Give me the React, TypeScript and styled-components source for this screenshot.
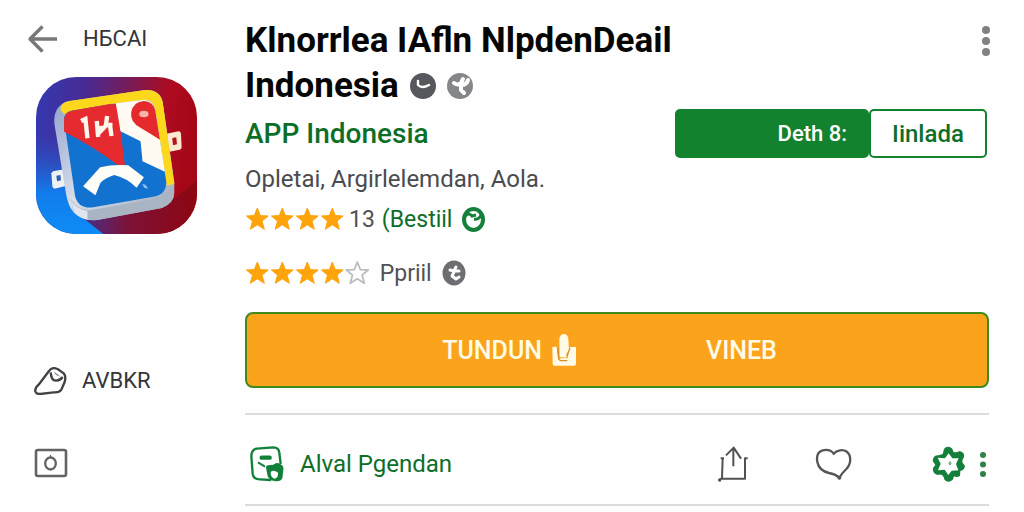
import React from "react";
import styled, { createGlobalStyle } from "styled-components";

const GREEN = "#13822f";
const GREEN_DARK = "#0d6e28";
const GREY = "#55565a";

const GlobalStyle = createGlobalStyle`
  *, *::before, *::after { box-sizing: border-box; }
  body {
    margin: 0;
    background: #fefefe;
    color: #4a4b4e;
    font-family: Roboto, "Liberation Sans", sans-serif;
  }
  button { font: inherit; color: inherit; cursor: pointer; }
`;

const Page = styled.div`
  display: grid;
  grid-template-columns: 245px minmax(0, 1fr);
`;

const Sidebar = styled.nav`
  display: flex;
  flex-direction: column;
  align-items: flex-start;
  padding-left: 27px;
`;

const SideLink = styled.a<{ $height: number; $inset?: number; $gap: number }>`
  display: flex;
  align-items: center;
  gap: ${(p) => p.$gap}px;
  height: ${(p) => p.$height}px;
  padding-left: ${(p) => p.$inset ?? 0}px;
  color: #343538;
  text-decoration: none;
`;

const SideLabel = styled.span`
  font-size: 22px;
  line-height: 28px;
`;

const AppLogo = styled.svg`
  display: block;
  width: 161px;
  height: 157px;
  margin: 0 0 106px 9px;
`;

const Main = styled.main`
  padding: 18px 35px 0 0;
`;

const Header = styled.header`
  display: flex;
  justify-content: space-between;
  align-items: flex-start;
`;

const Title = styled.h1`
  margin: 0;
  font-size: 35px;
  line-height: 45px;
  font-weight: 700;
  color: #060606;
`;

const TitleLine = styled.span`
  display: flex;
  align-items: center;
  gap: 11px;
`;

const IconButton = styled.button`
  display: flex;
  align-items: center;
  justify-content: center;
  padding: 0;
  border: 0;
  background: none;
`;

const MenuButton = styled(IconButton)`
  height: 45px;
  margin-right: -1px;
`;

const Summary = styled.section`
  display: flex;
  justify-content: space-between;
  align-items: flex-start;
`;

const Developer = styled.a`
  display: block;
  font-size: 28px;
  line-height: 52px;
  font-weight: 500;
  color: ${GREEN_DARK};
  text-decoration: none;
`;

const Tagline = styled.p`
  margin: 0;
  font-size: 24px;
  line-height: 39px;
`;

const RatingRow = styled.div`
  display: flex;
  align-items: center;
  height: 40px;
  font-size: 23px;
  & + & { margin-top: 14px; }
`;

const Stars = styled.span`
  display: flex;
  margin-right: 4px;
`;

const RatingText = styled.span<{ $green?: boolean }>`
  margin-right: 10px;
  color: ${(p) => (p.$green ? GREEN_DARK : "#505154")};
`;

const RatingCount = styled(RatingText)`
  margin-right: 7px;
`;

const Choice = styled.div`
  display: flex;
  margin: 1px 2px 0 0;
`;

const ChoiceButton = styled.button<{ $filled?: boolean }>`
  width: ${(p) => (p.$filled ? 194 : 118)}px;
  height: 49px;
  padding: ${(p) => (p.$filled ? "0 20px 0 0" : "0")};
  border: 2px solid ${GREEN};
  border-radius: 5px;
  background: ${(p) => (p.$filled ? GREEN : "#fff")};
  color: ${(p) => (p.$filled ? "#fff" : GREEN_DARK)};
  font-size: ${(p) => (p.$filled ? 22 : 24)}px;
  font-weight: 500;
  text-align: ${(p) => (p.$filled ? "right" : "center")};
`;

const InstallButton = styled.button`
  display: grid;
  grid-template-columns: 329px 1fr;
  align-items: center;
  width: 100%;
  height: 76px;
  margin-top: 19px;
  padding: 0;
  border: 2px solid #3f8a1d;
  border-radius: 8px;
  background: #fba31b;
  color: #fffbe6;
  font-size: 25px;
  font-weight: 500;
`;

const InstallLead = styled.span`
  display: flex;
  align-items: center;
  justify-content: flex-end;
  gap: 10px;
`;

const InstallTail = styled.span`
  padding-left: 130px;
  text-align: left;
`;

const Divider = styled.hr`
  height: 2px;
  margin: 0;
  border: 0;
  background: #dcdcde;
`;

const Actions = styled.section`
  display: flex;
  align-items: center;
  height: 89px;
  padding: 9px 0 0 5px;
`;

const ActionsWrap = styled.div`
  margin-top: 25px;
`;

const ReviewLink = styled.a`
  display: flex;
  align-items: center;
  gap: 15px;
  margin-right: auto;
  font-size: 24px;
  color: ${GREEN_DARK};
  text-decoration: none;
`;

const ActionGroup = styled.div`
  display: flex;
  align-items: center;
`;

const ActionButton = styled(IconButton)<{ $after: number }>`
  margin-right: ${(p) => p.$after}px;
`;

function Star({ empty }: { empty?: boolean }) {
  return (
    <svg width="25" height="26" viewBox="0 0 25 26" aria-hidden="true">
      <path
        d="M12.3 2 L15.3 9.6 L23.2 10 L17.1 15.1 L19.3 23.3 L12.3 18.8 L5.3 23.3 L7.5 15.1 L1.4 10 L9.3 9.6 Z"
        fill={empty ? "#fefefe" : "#fea40b"}
        stroke={empty ? "#bcbdc0" : "#fea40b"}
        strokeWidth={empty ? 1.8 : 1}
        strokeLinejoin="round"
      />
    </svg>
  );
}

function StarRating({ filled, total }: { filled: number; total: number }) {
  return (
    <Stars role="img" aria-label={`${filled} / 5`}>
      {Array.from({ length: total }, (_, i) => (
        <Star key={i} empty={i >= filled} />
      ))}
    </Stars>
  );
}

function Dots({ color, height, radius }: { color: string; height: number; radius: number }) {
  const w = radius * 2;
  return (
    <svg width={w} height={height} viewBox={`0 0 ${w} ${height}`} aria-hidden="true">
      {[radius, height / 2, height - radius].map((y) => (
        <circle key={y} cx={radius} cy={y} r={radius} fill={color} />
      ))}
    </svg>
  );
}

function Logo() {
  return (
    <AppLogo viewBox="33 20 482 471" preserveAspectRatio="none" role="img" aria-label="Indonesia">
      <defs>
        <linearGradient id="logoBg" x1="0" y1="0.15" x2="1" y2="0.3">
          <stop offset="0" stopColor="#3338b0" />
          <stop offset="0.3" stopColor="#4a2a92" />
          <stop offset="0.58" stopColor="#7d1a50" />
          <stop offset="0.8" stopColor="#ae0b20" />
          <stop offset="1" stopColor="#a50716" />
        </linearGradient>
        <linearGradient id="logoBlue" x1="0" y1="0" x2="0" y2="1">
          <stop offset="0.25" stopColor="#2755cc" stopOpacity="0" />
          <stop offset="0.7" stopColor="#127cec" />
          <stop offset="1" stopColor="#0d8cf5" />
        </linearGradient>
        <linearGradient id="logoShade" x1="0" y1="0" x2="1" y2="0">
          <stop offset="0" stopColor="#43308f" />
          <stop offset="0.4" stopColor="#7d1238" />
          <stop offset="1" stopColor="#8e0610" />
        </linearGradient>
        <linearGradient id="logoFrame" x1="0" y1="0" x2="1" y2="1">
          <stop offset="0" stopColor="#8c9fcb" />
          <stop offset="0.5" stopColor="#d8deea" />
          <stop offset="1" stopColor="#98a6b8" />
        </linearGradient>
        <clipPath id="logoClip">
          <rect x="33" y="20" width="482" height="471" rx="120" />
        </clipPath>
      </defs>
      <g clipPath="url(#logoClip)">
        <rect x="33" y="20" width="482" height="471" fill="url(#logoBg)" />
        <path d="M33 80 L110 120 L180 445 L235 491 H33 Z" fill="url(#logoBlue)" />
        <path d="M170 440 L440 390 L515 330 V491 H235 Z" fill="url(#logoShade)" />
        <path d="M84 303 L122 296 L130 345 L89 355 Q83 355 82 348 L79 309 Z" fill="#eef0f4" />
        <path d="M94 316 L106 314 L108 330 L96 333 Z" fill="#2c61b8" />
        <path d="M424 190 L460 183 Q466 183 467 190 L469 230 Q469 236 463 238 L432 244 Z" fill="#fde9cf" />
        <path d="M441 203 L453 201 L455 222 L443 225 Z" fill="#b21515" />
        <path
          d="M88 160 Q84 112 122 94 L360 59 Q402 56 412 94 L447 335 V368 Q447 398 410 413 L220 448 Q177 456 145 426 Q128 405 122 365 Z"
          fill="url(#logoFrame)"
        />
        <path d="M137 385 Q155 418 194 420 L387 386 Q432 375 446 345 V370 Q444 399 410 413 L220 448 Q175 454 145 424 Z" fill="#aab5c4" />
        <path d="M187 421 L187 448 Q165 444 148 427 L137 390 Q155 418 187 421 Z" fill="#dfe5ee" />
        <path d="M106 118 Q106 97 132 92 L360 59 Q402 57 412 94 L447 340 L425 346 L389 116 Q384 87 356 91 L138 121 L117 132 Z" fill="#fbd81c" />
        <path d="M117 150 Q115 127 140 121 L245 103 L355 89 Q383 88 388 112 L423 335 Q424 370 392 378 L205 411 Q160 417 150 377 Z" fill="#1173cf" />
        <path d="M117 184 V150 Q117 127 140 121 L260 100 Q276 99 278 118 L299 284 H278 Q205 228 117 184 Z" fill="#e52b30" />
        <path d="M272 99 L355 88 Q384 87 390 118 L419 304 L352 273 L346 213 L286 183 Z" fill="#fffaf2" />
        <path d="M318 126 Q324 94 356 92 Q384 93 390 120 L404 208 Q372 188 347 173 Q314 157 318 126 Z" fill="#e42a2d" />
        <ellipse cx="356" cy="131" rx="14" ry="10" fill="#f7b5a8" />
        <path d="M174 348 L225 291 Q265 281 309 285 L356 321 L334 352 Q305 323 267 314 Q239 324 226 337 L211 375 Z" fill="#fffdf8" />
        <path d="M351 341 L361 343 L369 355 L357 352 Z" fill="#8dc5ef" />
        <g fill="none" stroke="#fff6ec" strokeWidth="13">
          <path d="M168 152 L181 146 L187 204" />
          <path d="M215 152 L219 200 M219 190 L242 166 L246 137 M244 164 L262 164 M254 160 L259 197 M215 174 L238 172" />
        </g>
      </g>
    </AppLogo>
  );
}

export default function App() {
  return (
    <>
      <GlobalStyle />
      <Page>
        <Sidebar>
          <SideLink href="#back" $height={77} $gap={25}>
            <svg width="31" height="28" viewBox="0 0 31 28" fill="none" stroke="#77787a" strokeWidth="3.4" aria-hidden="true">
              <path d="M30 14 H3 M15.5 1.5 L3 14 L15.5 26.5" strokeLinejoin="round" />
            </svg>
            <SideLabel>HБCAI</SideLabel>
          </SideLink>
          <Logo />
          <SideLink href="#write" $height={82} $inset={7} $gap={15}>
            <svg width="33" height="28" viewBox="44 48 99 84" fill="none" stroke="#414245" aria-hidden="true">
              <path
                d="M48 121 Q46 111 58 101 L89 60 Q99 46 116 55 L133 67 Q141 75 136 93 L126 116 Q119 126 103 124 L63 129 Q51 130 48 121 Z"
                strokeWidth="7"
              />
              <path d="M94 64 Q96 90 111 89 Q123 88 130 78" strokeWidth="7" />
              <path d="M103 61 Q107 76 124 77 Z" fill="#8b8c8e" stroke="none" />
            </svg>
            <SideLabel>AVBKR</SideLabel>
          </SideLink>
          <SideLink href="#photos" $height={82} $inset={7} $gap={0} aria-label="Foto">
            <svg width="34" height="30" viewBox="0 0 34 30" fill="none" stroke="#626366" aria-hidden="true">
              <rect x="2" y="2" width="30" height="26" rx="2" strokeWidth="2.6" />
              <ellipse cx="16.5" cy="15.5" rx="5.3" ry="6" strokeWidth="2.3" />
              <path d="M16.5 7 V10" strokeWidth="1.2" />
            </svg>
          </SideLink>
        </Sidebar>

        <Main>
          <Header>
            <Title>
              <TitleLine>Klnorrlea IAfln NlpdenDeail</TitleLine>
              <TitleLine>
                Indonesia
                <svg width="63" height="28" viewBox="0 0 63 28" aria-hidden="true">
                  <circle cx="13" cy="14" r="13" fill="#57585d" />
                  <path d="M8 9 V13 M8 13 Q12 17 19 13" fill="none" stroke="#fff" strokeWidth="2.4" strokeLinecap="round" />
                  <circle cx="50" cy="14" r="13" fill="#858689" />
                  <path
                    d="M44 11 Q48 14 51 11 M51 11 L53 7 M58 8 Q57 13 51 13 L51 18 L54 21"
                    fill="none"
                    stroke="#fff"
                    strokeWidth="4"
                    strokeLinecap="round"
                  />
                </svg>
              </TitleLine>
            </Title>
            <MenuButton aria-label="Menu">
              <Dots color="#808183" height={30} radius={4} />
            </MenuButton>
          </Header>

          <Summary>
            <div>
              <Developer href="#developer">APP Indonesia</Developer>
              <Tagline>Opletai, Argirlelemdan, Aola.</Tagline>
              <RatingRow>
                <StarRating filled={4} total={4} />
                <RatingCount>13</RatingCount>
                <RatingText $green>(Bestiil</RatingText>
                <svg width="23" height="25" viewBox="0 0 23 25" fill="none" aria-hidden="true">
                  <ellipse cx="11.5" cy="12.5" rx="9.5" ry="10.5" stroke="#14803a" strokeWidth="4" />
                  <path d="M3 9 Q7 5 10 9 L14 8 M19 8 Q17 13 12 12" stroke="#14803a" strokeWidth="3" />
                </svg>
              </RatingRow>
              <RatingRow>
                <StarRating filled={4} total={5} />
                <RatingText>&nbsp;Ppriil</RatingText>
                <svg width="24" height="26" viewBox="0 0 24 26" fill="none" aria-hidden="true">
                  <ellipse cx="12" cy="13" rx="11.5" ry="12.5" fill="#6d6e71" />
                  <path
                    d="M8 10 L12 11 L14 7 M12 11 L17 11 M12 12 L10 16 L14 19 L17 17"
                    stroke="#fff"
                    strokeWidth="3"
                    strokeLinecap="round"
                    strokeLinejoin="round"
                  />
                </svg>
              </RatingRow>
            </div>
            <Choice>
              <ChoiceButton $filled>Deth 8:</ChoiceButton>
              <ChoiceButton>Iinlada</ChoiceButton>
            </Choice>
          </Summary>

          <InstallButton>
            <InstallLead>
              TUNDUN
              <svg width="24" height="32" viewBox="951 93 72 96" aria-hidden="true">
                <path d="M952 132 L965 131 L970 166 H998 L1005 132 H1023 V183 Q1023 188 1017 188 H958 Q953 188 953 182 Z" fill="#fffbe6" />
                <path d="M973 108 Q975 93 987 93 Q999 95 1000 108 L1002 142 L993 164 L974 162 Z" fill="#fffbe6" />
                <path d="M968 134 L971 167 L976 173 H997 M995 158 L1005 136" fill="none" stroke="#d98c22" strokeWidth="4" />
              </svg>
            </InstallLead>
            <InstallTail>VINEB</InstallTail>
          </InstallButton>

          <ActionsWrap>
            <Divider />
            <Actions>
              <ReviewLink href="#reviews">
                <svg width="35" height="36" viewBox="46 138 105 108" fill="none" stroke="#12803a" aria-hidden="true">
                  <path d="M66 146 L116 142 Q133 142 134 159 L138 192 M110 240 L75 238 Q56 238 54 221 L50 168 Q51 149 66 146" strokeWidth="7" />
                  <path d="M81 173 H105" strokeWidth="13" strokeLinecap="round" />
                  <path d="M70 187 L91 200" strokeWidth="6" />
                  <path
                    d="M94 203 Q93 196 106 195 L116 194 Q126 184 138 193 Q148 198 146 211 L143 235 Q138 246 119 243 Q106 242 99 229 Z"
                    fill="#12803a"
                    stroke="none"
                  />
                  <path d="M108 216 Q117 208 130 218 Q132 233 119 236 Q108 233 108 216 Z" fill="#fff" stroke="none" />
                </svg>
                Alval Pgendan
              </ReviewLink>
              <ActionGroup>
                <ActionButton $after={66} aria-label="Bagikan">
                  <svg width="32" height="38" viewBox="48 46 96 114" fill="none" stroke="#505154" strokeWidth="6" aria-hidden="true">
                    <path d="M59 86 H69 M65 86 L63 145 L55 151 M60 147 H132 V86 H140 M120 87 L98 54 L75 77 M97 55 V110" strokeLinejoin="round" />
                    <circle cx="56" cy="151" r="5" fill="#505154" stroke="none" />
                  </svg>
                </ActionButton>
                <ActionButton $after={80} aria-label="Suka">
                  <svg width="37" height="38" viewBox="341 50 111 114" fill="none" stroke={GREY} strokeWidth="7" aria-hidden="true">
                    <path d="M397 76 Q386 61 364 66 Q343 72 348 101 Q353 127 383 134 Q402 137 414 148 Q423 133 435 122 Q451 105 445 82 Q437 63 416 66 Q404 68 397 76 Z" />
                    <circle cx="414" cy="148" r="6" fill={GREY} stroke="none" />
                  </svg>
                </ActionButton>
                <ActionButton $after={14} aria-label="Setelan">
                  <svg width="34" height="36" viewBox="695 51 102 108" aria-hidden="true">
                    <path
                      fill="#12803a"
                      fillRule="evenodd"
                      d="M730 64 Q732 53 744 53 Q757 54 759 68 Q766 73 778 66 Q794 71 791 84 Q785 93 786 100 L794 111 Q793 123 780 126 L779 141 Q769 147 761 142 Q758 158 744 158 Q731 157 730 144 L724 137 L709 137 Q695 131 698 117 L705 108 L697 96 Q698 78 715 79 L727 75 Z M745 73 L734 88 L712 86 L721 104 L713 124 L733 122 L744 138 L754 125 L774 124 L767 105 L775 88 L756 88 Z"
                    />
                    <ellipse cx="749" cy="103" rx="4" ry="6" fill="#7fae91" />
                  </svg>
                </ActionButton>
                <ActionButton $after={3} aria-label="Lainnya">
                  <Dots color="#2f8148" height={25} radius={3} />
                </ActionButton>
              </ActionGroup>
            </Actions>
            <Divider />
          </ActionsWrap>
        </Main>
      </Page>
    </>
  );
}
